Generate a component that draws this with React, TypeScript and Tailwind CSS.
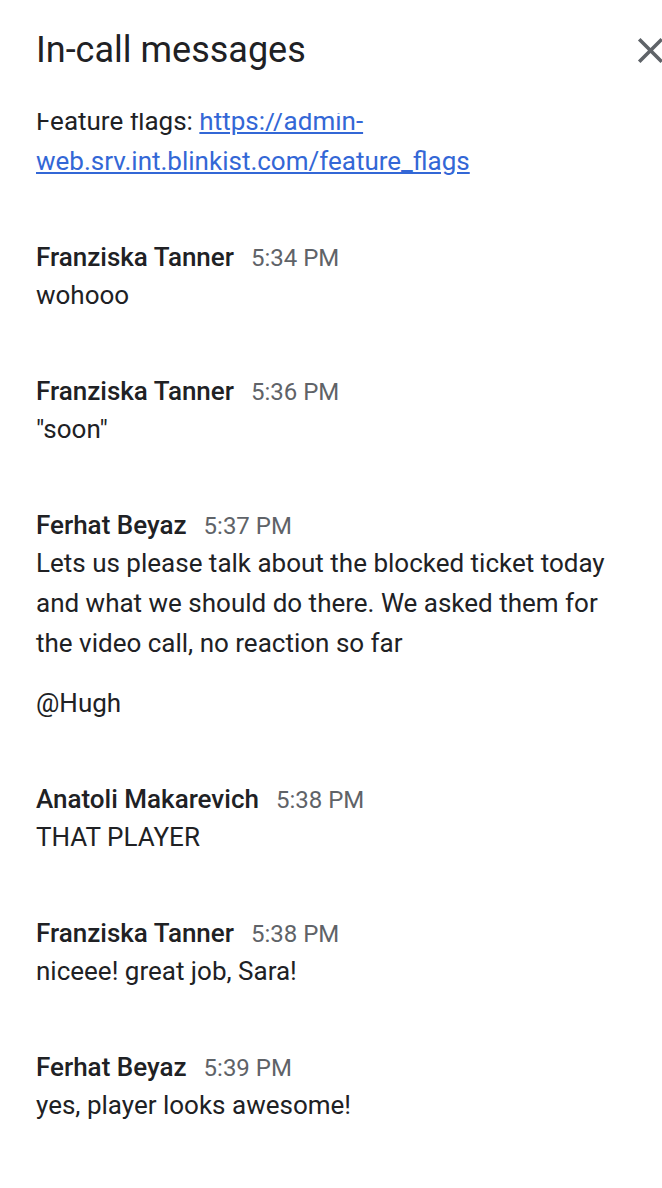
import React from "react";

type Msg = { name: string; time: string; paras: string[] };

const messages: Msg[] = [
  { name: "Franziska Tanner", time: "5:34 PM", paras: ["wohooo"] },
  { name: "Franziska Tanner", time: "5:36 PM", paras: ['"soon"'] },
  {
    name: "Ferhat Beyaz",
    time: "5:37 PM",
    paras: [
      "Lets us please talk about the blocked ticket today and what we should do there. We asked them for the video call, no reaction so far",
      "@Hugh",
    ],
  },
  { name: "Anatoli Makarevich", time: "5:38 PM", paras: ["THAT PLAYER"] },
  { name: "Franziska Tanner", time: "5:38 PM", paras: ["niceee! great job, Sara!"] },
  { name: "Ferhat Beyaz", time: "5:39 PM", paras: ["yes, player looks awesome!"] },
];

export default function App() {
  return (
    <div
      className="w-[662px] h-[1188px] overflow-hidden bg-white flex flex-col relative"
      style={{ fontFamily: "Roboto, 'Noto Sans', Arial, sans-serif" }}
    >
      <header className="h-[113px] shrink-0 flex items-start pl-[36px]">
        <h1 className="pt-[26px] text-[36px] leading-[48px] font-normal text-[#202124]">
          In-call messages
        </h1>
        <button className="ml-auto mt-[29px] -mr-[10px] w-[43px] h-[43px] shrink-0 text-[#5f6368]" aria-label="Close">
          <svg viewBox="0 0 24 24" width="43" height="43" fill="currentColor">
            <path d="M19 6.41L17.59 5 12 10.59 6.41 5 5 6.41 10.59 12 5 17.59 6.41 19 12 13.41 17.59 19 19 17.59 13.41 12z" />
          </svg>
        </button>
      </header>
      <div className="flex-1 overflow-hidden">
        <div className="-mt-[12px] pl-[36px] pr-[36px] flex flex-col gap-[58px] text-[#202124]">
          <p className="text-[26px] leading-[40px]">
            Feature flags:{" "}
            <a href="#" className="text-[#3367d6] underline">
              https://admin-web.srv.int.blinkist.com/feature_flags
            </a>
          </p>
          {messages.map((m, i) => (
            <div key={i} className="flex flex-col">
              <div className="h-[36px] leading-[36px] flex items-baseline">
                <span className="text-[26px] font-medium text-[#202124]">{m.name}</span>
                <span className="ml-[17px] text-[24px] text-[#5f6368]">{m.time}</span>
              </div>
              <div className="flex flex-col gap-[20px]">
                {m.paras.map((p, j) => (
                  <p key={j} className="text-[26px] leading-[40px]">
                    {p}
                  </p>
                ))}
              </div>
            </div>
          ))}
        </div>
      </div>
    </div>
  );
}
